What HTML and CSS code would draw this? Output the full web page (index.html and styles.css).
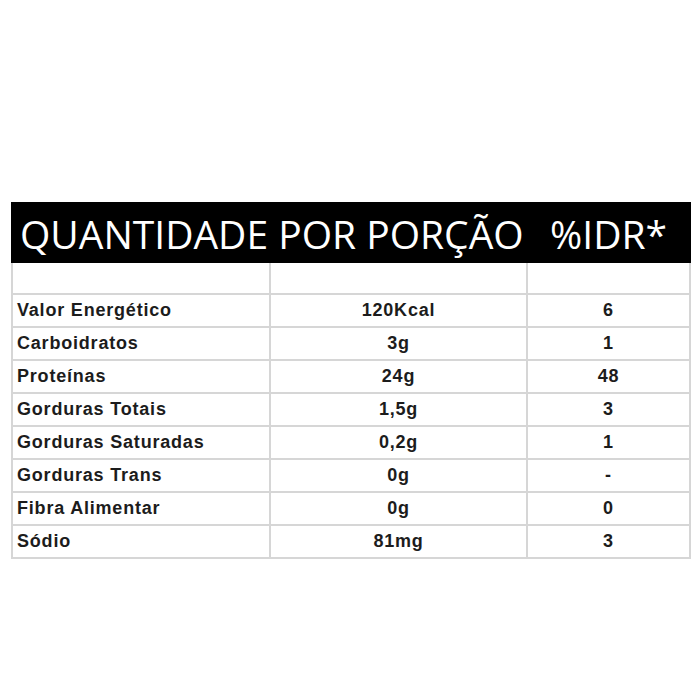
FILE: index.html
```html
<!DOCTYPE html>
<html>
<head>
<meta charset="utf-8">
<link rel="stylesheet" href="styles.css">
</head>
<body>
<table class="nutri">
  <colgroup>
    <col class="c1"><col class="c2"><col class="c3">
  </colgroup>
  <tr class="head">
    <td colspan="2" class="h-title">QUANTIDADE POR PORÇÃO</td>
    <td class="h-idr">%IDR*</td>
  </tr>
  <tr class="blank"><td></td><td></td><td></td></tr>
  <tr><td>Valor Energético</td><td class="num">120Kcal</td><td class="num">6</td></tr>
  <tr><td>Carboidratos</td><td class="num">3g</td><td class="num">1</td></tr>
  <tr><td>Proteínas</td><td class="num">24g</td><td class="num">48</td></tr>
  <tr><td>Gorduras Totais</td><td class="num">1,5g</td><td class="num">3</td></tr>
  <tr><td>Gorduras Saturadas</td><td class="num">0,2g</td><td class="num">1</td></tr>
  <tr><td>Gorduras Trans</td><td class="num">0g</td><td class="num">-</td></tr>
  <tr><td>Fibra Alimentar</td><td class="num">0g</td><td class="num">0</td></tr>
  <tr><td>Sódio</td><td class="num">81mg</td><td class="num">3</td></tr>
</table>
</body>
</html>
```
FILE: styles.css
```css
html, body {
  margin: 0;
  padding: 0;
  background: #fff;
}
body {
  padding: 202px 0 0 11px;
}
.nutri {
  border-collapse: collapse;
  table-layout: fixed;
  width: 678px;
  font-family: "Liberation Sans", Arial, sans-serif;
  font-weight: bold;
  font-size: 18px;
  letter-spacing: 0.8px;
  color: #1c1c1c;
}
.c1 { width: 258px; }
.c2 { width: 257px; }
.c3 { width: 163px; }
.nutri td {
  border: 2px solid #d6d6d6;
  height: 33px;
  padding: 0 0 0 4px;
  box-sizing: border-box;
  vertical-align: middle;
  white-space: nowrap;
}
.nutri td.num {
  text-align: center;
  padding: 0;
}
.head td {
  background: #000;
  color: #fff;
  height: 59px;
  border-color: #000;
  font-family: "Open Sans", "Noto Sans", sans-serif;
  font-weight: normal;
  font-size: 39px;
  letter-spacing: 0;
  padding-top: 2px;
}
.head td.h-title {
  padding-left: 7px;
}
.head td.h-idr {
  text-align: center;
  padding-left: 0;
}
.blank td {
  height: 32px;
}
```
